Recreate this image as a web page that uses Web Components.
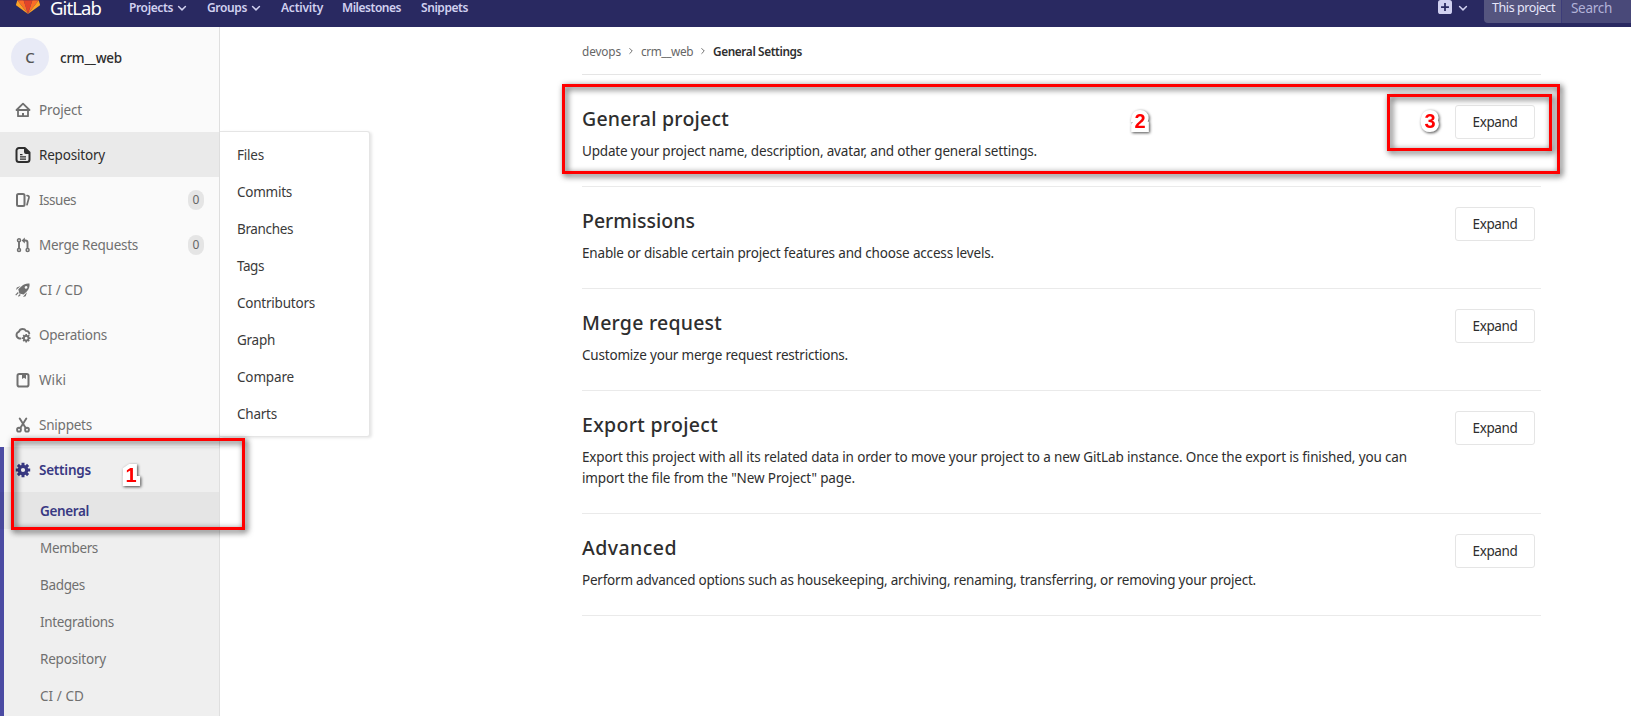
<!DOCTYPE html>
<html lang="en">
<head>
<meta charset="utf-8">
<title>General Settings</title>
<style>
html,body{margin:0;height:716px;overflow:hidden;background:#fff}
body{font:13.5px/21px "Noto Sans","Open Sans",sans-serif;color:#2e2e2e}
</style>
</head>
<body>
<gl-app></gl-app>
<script>
const define=(name,html,setup)=>{
  const t=document.createElement('template');t.innerHTML=html;
  customElements.define(name,class extends HTMLElement{
    connectedCallback(){
      if(this.shadowRoot)return;
      this.attachShadow({mode:'open'}).append(t.content.cloneNode(true));
      if(setup)setup(this,this.shadowRoot);
    }
  });
};

const S='fill="none" stroke="currentColor" stroke-linejoin="round"';
const ICONS={
 home:`<path ${S} stroke-width="1.8" stroke-linecap="round" d="M1.5 8h13L8 1.600 1.5 8zM3 8.5V14.200h10V8.5"/><path fill="currentColor" d="M7 11h2v3.200H7z"/>`,
 doc:`<path ${S} stroke-width="2" d="M9.8 1H4a2.5 2.5 0 0 0-2.5 2.500v9A2.500 2.500 0 0 0 4 15h8a2.500 2.500 0 0 0 2.500-2.500V5.500z"/><path fill="currentColor" d="M9 1h1.500L15 5.500V7h-4a2 2 0 0 1-2-2zM5 7h2.500v1.200H5zM5 9.300h6v1.200H5zM5 11.600h6v1.200H5z"/>`,
 issues:`<rect ${S} stroke-width="2" x="2" y="2" width="7.500" height="12" rx="1.500"/><path ${S} stroke-width="1.700" stroke-linecap="round" d="M12 3.500l1.200.4c.7.300 1 .8.8 1.500l-2 7.300"/>`,
 merge:`<g ${S} stroke-width="1.500"><circle cx="4" cy="3.300" r="1.500"/><circle cx="4" cy="13" r="1.500"/><circle cx="12.600" cy="13" r="1.500"/><path d="M4 5v6.500" stroke-width="1.900"/><path d="M8.500 3.500h2a2 2 0 0 1 2 2v6" stroke-width="1.900"/></g><path fill="currentColor" d="M9.800.6v5.800L6.600 3.500z"/>`,
 rocket:`<path fill="currentColor" fill-rule="evenodd" d="M14.500 1.500c.4 3-.5 5.700-2.700 7.900L8.600 12.500 4.300 11.400 3.300 7.300 6.600 4.200c2.200-2.200 5-3.100 7.900-2.700zM11 4a1.400 1.400 0 1 0 .1 2.800A1.400 1.400 0 0 0 11 4zM5.600 4.100L1.800 5.400 1 8l3-2.500zM12 10.300l-1.300 3.900L8 15l2.300-3zM2.900 10.100l.8.8-2.600 2.600-.8-.8zM4.900 12.100l.8.8-1.900 1.900-.8-.8z"/>`,
 ops:`<path ${S} stroke-width="1.900" stroke-linecap="round" d="M5.500 11.500H4.300C2.300 10.800 1.500 9.500 1.500 8c0-1.600.9-2.800 2.300-3.200C4.500 3 5.800 2 7.600 2c1.500 0 2.700.7 3.400 1.900 1.800 0 3 1 3.300 2.600"/><g transform="translate(11.200 11.200)"><circle r="2.300" ${S} stroke-width="1.800"/><path stroke="currentColor" stroke-width="1.700" d="M0-4.300V-2M0 4.300V2M-4.300 0H-2M4.300 0H2M-3-3l1.500 1.500M3 3L1.500 1.500M-3 3l1.500-1.500M3-3L1.500-1.500"/></g>`,
 book:`<rect ${S} stroke-width="2" x="2.500" y="2" width="11" height="12.500" rx="1.800"/><path fill="currentColor" d="M7 2h4v5L9 5.700 7 7z"/>`,
 scissors:`<g ${S} stroke-width="1.900"><circle cx="4" cy="12.700" r="1.900"/><circle cx="12" cy="12.700" r="1.900"/><path stroke-linecap="round" d="M4.700 1.500l6 9.500M11.300 1.500l-6 9.500"/></g>`,
 gear:`<circle cx="8" cy="8" r="3.700" fill="none" stroke="currentColor" stroke-width="3.200"/><path stroke="currentColor" stroke-width="3" d="M8 .8v3M8 15.200v-3M.8 8h3M15.200 8h-3M2.900 2.900L5 5M13.100 13.100L11 11M2.900 13.100L5 11M13.100 2.900L11 5"/>`,
 chevron:`<path fill="none" stroke="currentColor" stroke-width="2.300" stroke-linecap="round" stroke-linejoin="round" d="M2.500 5.500L8 11l5.500-5.500"/>`,
 next:`<path fill="none" stroke="currentColor" stroke-width="2" stroke-linecap="round" stroke-linejoin="round" d="M5.500 3l5 5-5 5"/>`,
 plus:`<path fill="currentColor" fill-rule="evenodd" d="M3 0h10a3 3 0 0 1 3 3v10a3 3 0 0 1-3 3H3a3 3 0 0 1-3-3V3a3 3 0 0 1 3-3zm4 3.500V7H3.500v2H7v3.500h2V9h3.500V7H9V3.500z"/>`
};
define('gl-icon','<style>:host{display:block;flex:none;width:16px;height:16px}svg{display:block;width:100%;height:100%}</style><svg viewBox="0 0 16 16"></svg>',
 (e,r)=>{r.querySelector('svg').innerHTML=ICONS[e.getAttribute('name')];});

/* A single line of text tracked so that it fills the width given in "w". */
define('gl-text','<style>:host{display:inline-block;white-space:pre;flex:none}</style><slot></slot>',(e)=>{
  const w=+e.getAttribute('w'),n=e.textContent.length;
  if(w&&n){const d=(w-e.getBoundingClientRect().width)/n;e.style.letterSpacing=d.toFixed(4)+'px';e.style.width=w+'px';}
});

define('gl-logo',`<style>:host{display:block;width:24px;height:24px;flex:none}svg{display:block}</style>
<svg width="24" height="24" viewBox="0 0 36 36"><path fill="#e24329" d="M18 34.380 24.600 14H11.400z"/><path fill="#fc6d26" d="M18 34.380 11.380 14H2z"/><path fill="#fca326" d="M2 14 .1 20.160a1.400 1.400 0 0 0 .5 1.500L18 34.380z"/><path fill="#e24329" d="M2 14h9.380L7.400 1.500a.75.75 0 0 0-1.500 0z"/><path fill="#fc6d26" d="M18 34.380 24.620 14H34z"/><path fill="#fca326" d="m34 14 2 6.160a1.400 1.400 0 0 1-.5 1.500L18 34.380z"/><path fill="#e24329" d="M34 14h-9.380l4-12.500a.75.75 0 0 1 1.500 0z"/></svg>`);

define('gl-header',`<style>
:host{display:flex;box-sizing:border-box;height:27px;background:#292961;color:#d1d1f0;padding-left:16px}
.row{display:flex;align-items:center;height:40px;margin-top:-12px;width:100%;flex:none;box-sizing:border-box}
:host{width:1631px}
.row{width:1615px}
.logo{margin-top:-10px}
.brand{font-size:18.500px;line-height:15px;color:#fff;margin:-1px 28px 0 10px}
.nav{font-size:12px;font-weight:600;line-height:16px}
gl-icon{width:10px;height:10px}
.search{display:flex;height:30px;margin-left:16px;width:147px;flex:none;border-radius:4px 0 0 4px;overflow:hidden;line-height:30px}
.scope{background:#55557f;width:69px;padding-left:8px;font-size:12.500px;color:#e6e6fa}
.field{background:#494979;flex:1;padding-left:9px;border-left:1px solid #3c3c79;color:#b2b2d8}
</style>
<div class="row"><gl-logo class="logo"></gl-logo><gl-text class="brand" w="51">GitLab</gl-text>
<gl-text class="nav" w="44">Projects</gl-text><gl-icon name="chevron" style="margin:0 20px 0 4px"></gl-icon>
<gl-text class="nav" w="40">Groups</gl-text><gl-icon name="chevron" style="margin:0 20px 0 4px"></gl-icon>
<gl-text class="nav" w="42" style="margin-right:19px">Activity</gl-text><gl-text class="nav" w="59" style="margin-right:20px">Milestones</gl-text><gl-text class="nav" w="47">Snippets</gl-text>
<gl-icon name="plus" style="width:14px;height:14px;margin:-2px 6px 0 auto"></gl-icon><gl-icon name="chevron"></gl-icon>
<div class="search"><div class="scope"><gl-text w="63">This project</gl-text></div><div class="field"><gl-text w="41">Search</gl-text></div></div></div>`);

define('gl-nav-item',`<style>
:host{display:flex;align-items:center;height:45px;box-sizing:border-box;padding:2px 15px 0;color:#707070}
:host([hover]){background:#eaeaea;color:#2e2e2e}
:host([active]){color:#393982;font-weight:600}
gl-icon{width:16px;height:16px;margin:-1px 8px 0 0}
i{margin:-1px 0 0 auto;font:12px/20px "Noto Sans",sans-serif;width:16px;height:20px;text-align:center;border-radius:8px;background:#e5e5e5;color:#666}
</style><slot></slot>`,(e,r)=>{
  const ic=document.createElement('gl-icon');ic.setAttribute('name',e.getAttribute('icon'));r.insertBefore(ic,r.querySelector('slot'));
  if(e.hasAttribute('count')){const b=document.createElement('i');b.textContent=e.getAttribute('count');r.append(b);}
});
define('gl-sub-item',`<style>
:host{display:flex;align-items:center;height:37px;box-sizing:border-box;padding:2px 0 0 var(--inset,40px);color:var(--ink,#707070)}
:host([active]){background:rgba(0,0,0,.04);color:#393982;font-weight:600}
</style><slot></slot>`);

define('gl-sidebar',`<style>
:host{display:block;box-sizing:border-box;width:220px;height:689px;background:#fafafa;border-right:1px solid #dfdfdf;overflow:hidden}
.top{display:flex;align-items:center;height:60px;padding-left:11px}
.av{width:38px;height:38px;border-radius:50%;background:#e8eaf6;color:#555;text-align:center;line-height:38px;font-size:15px;font-weight:500;margin-right:11px}
.open{background:#efefef;box-shadow:inset 4px 0 #4b4ba3;height:300px}
</style>
<div class="top"><div class="av">C</div><gl-text w="62" style="font-weight:500;margin-top:2px">crm__web</gl-text></div>
<gl-nav-item icon="home"><gl-text w="43">Project</gl-text></gl-nav-item>
<gl-nav-item icon="doc" hover><gl-text w="66">Repository</gl-text></gl-nav-item>
<gl-nav-item icon="issues" count="0"><gl-text w="37">Issues</gl-text></gl-nav-item>
<gl-nav-item icon="merge" count="0"><gl-text w="99">Merge Requests</gl-text></gl-nav-item>
<gl-nav-item icon="rocket"><gl-text w="44">CI / CD</gl-text></gl-nav-item>
<gl-nav-item icon="ops"><gl-text w="68">Operations</gl-text></gl-nav-item>
<gl-nav-item icon="book"><gl-text w="27">Wiki</gl-text></gl-nav-item>
<gl-nav-item icon="scissors"><gl-text w="53">Snippets</gl-text></gl-nav-item>
<div class="open">
<gl-nav-item icon="gear" active><gl-text w="52">Settings</gl-text></gl-nav-item>
<gl-sub-item active><gl-text w="49">General</gl-text></gl-sub-item>
<gl-sub-item><gl-text w="58">Members</gl-text></gl-sub-item>
<gl-sub-item><gl-text w="45">Badges</gl-text></gl-sub-item>
<gl-sub-item><gl-text w="74">Integrations</gl-text></gl-sub-item>
<gl-sub-item><gl-text w="66">Repository</gl-text></gl-sub-item>
<gl-sub-item><gl-text w="44">CI / CD</gl-text></gl-sub-item>
</div>`);

define('gl-flyout',`<style>
:host{display:block;position:absolute;left:220px;top:131px;width:149px;box-sizing:content-box;padding:4px 0;background:#fff;border:1px solid #e5e5e5;border-left:0;border-radius:0 3px 3px 0;box-shadow:2px 1px 3px rgba(0,0,0,.1);--inset:17px;--ink:#3a3a3a}
</style>
<gl-sub-item><gl-text w="27">Files</gl-text></gl-sub-item><gl-sub-item><gl-text w="55">Commits</gl-text></gl-sub-item>
<gl-sub-item><gl-text w="56">Branches</gl-text></gl-sub-item><gl-sub-item><gl-text w="27">Tags</gl-text></gl-sub-item>
<gl-sub-item><gl-text w="78">Contributors</gl-text></gl-sub-item><gl-sub-item><gl-text w="38">Graph</gl-text></gl-sub-item>
<gl-sub-item><gl-text w="57">Compare</gl-text></gl-sub-item><gl-sub-item><gl-text w="40">Charts</gl-text></gl-sub-item>`);

define('gl-button',`<style>:host{display:flex;align-items:center;justify-content:center;box-sizing:border-box;width:80px;height:34px;border:1px solid #e5e5e5;border-radius:3px;background:#fff}</style><slot></slot>`);

define('gl-section',`<style>
:host{display:flex;justify-content:space-between;align-items:flex-start;box-sizing:border-box;padding:20px 6px 24px 0;border-bottom:1px solid #eaeaea}
.h{height:28px;line-height:28px;font-size:19.500px;font-weight:500}
.d{margin-top:8px;display:flex;flex-direction:column;align-items:flex-start}
</style><div><div class="h"><slot name="title"></slot></div><div class="d"><slot name="desc"></slot></div></div><gl-button><gl-text w="45">Expand</gl-text></gl-button>`);

define('gl-content',`<style>
:host{display:block;width:959px;margin-left:362px}
.crumbs{display:flex;align-items:center;height:47px;box-sizing:border-box;padding-top:2px;height:48px;border-bottom:1px solid #e5e5e5;font-size:11.800px;color:#666;margin-bottom:10px}
.crumbs gl-icon{width:8px;height:8px;margin:-2px 6px 0;color:#707070}
b{font-weight:600;color:#2e2e2e}
</style>
<div class="crumbs"><gl-text w="39">devops</gl-text><gl-icon name="next"></gl-icon><gl-text w="52">crm__web</gl-text><gl-icon name="next"></gl-icon><b><gl-text w="89">General Settings</gl-text></b></div>
<gl-section><gl-text slot="title" w="147">General project</gl-text><gl-text slot="desc" w="455">Update your project name, description, avatar, and other general settings.</gl-text></gl-section>
<gl-section><gl-text slot="title" w="113">Permissions</gl-text><gl-text slot="desc" w="412">Enable or disable certain project features and choose access levels.</gl-text></gl-section>
<gl-section><gl-text slot="title" w="140">Merge request</gl-text><gl-text slot="desc" w="266">Customize your merge request restrictions.</gl-text></gl-section>
<gl-section><gl-text slot="title" w="136">Export project</gl-text><gl-text slot="desc" w="825">Export this project with all its related data in order to move your project to a new GitLab instance. Once the export is finished, you can</gl-text><gl-text slot="desc" w="273">import the file from the "New Project" page.</gl-text></gl-section>
<gl-section><gl-text slot="title" w="95">Advanced</gl-text><gl-text slot="desc" w="674">Perform advanced options such as housekeeping, archiving, renaming, transferring, or removing your project.</gl-text></gl-section>`);

define('gl-mark',`<style>:host{display:block;position:absolute;box-sizing:border-box;border:3px solid #f00;filter:drop-shadow(2px 2px 3px rgba(0,0,0,.8))}</style>`);
define('gl-step',`<style>:host{display:block;position:absolute;width:20px;text-align:center;font:bold 20px/24px "Liberation Sans",sans-serif;color:#f00;-webkit-text-stroke:8px #fff;stroke-linejoin:round;paint-order:stroke fill;filter:drop-shadow(1.500px 1.500px 1.500px rgba(0,0,0,.7))}</style><slot></slot>`);

define('gl-app',`<style>:host{display:block;position:relative;height:716px;overflow:hidden}.body{display:flex}</style>
<gl-header></gl-header><div class="body"><gl-sidebar></gl-sidebar><gl-content></gl-content></div><gl-flyout></gl-flyout>
<gl-mark style="left:11px;top:438px;width:234px;height:92px"></gl-mark>
<gl-mark style="left:562px;top:84px;width:998px;height:90px"></gl-mark>
<gl-mark style="left:1387px;top:94px;width:165px;height:57px"></gl-mark>
<gl-step style="left:121px;top:463px">1</gl-step><gl-step style="left:1130px;top:109px">2</gl-step><gl-step style="left:1420px;top:109px">3</gl-step>`);
</script>
</body>
</html>
